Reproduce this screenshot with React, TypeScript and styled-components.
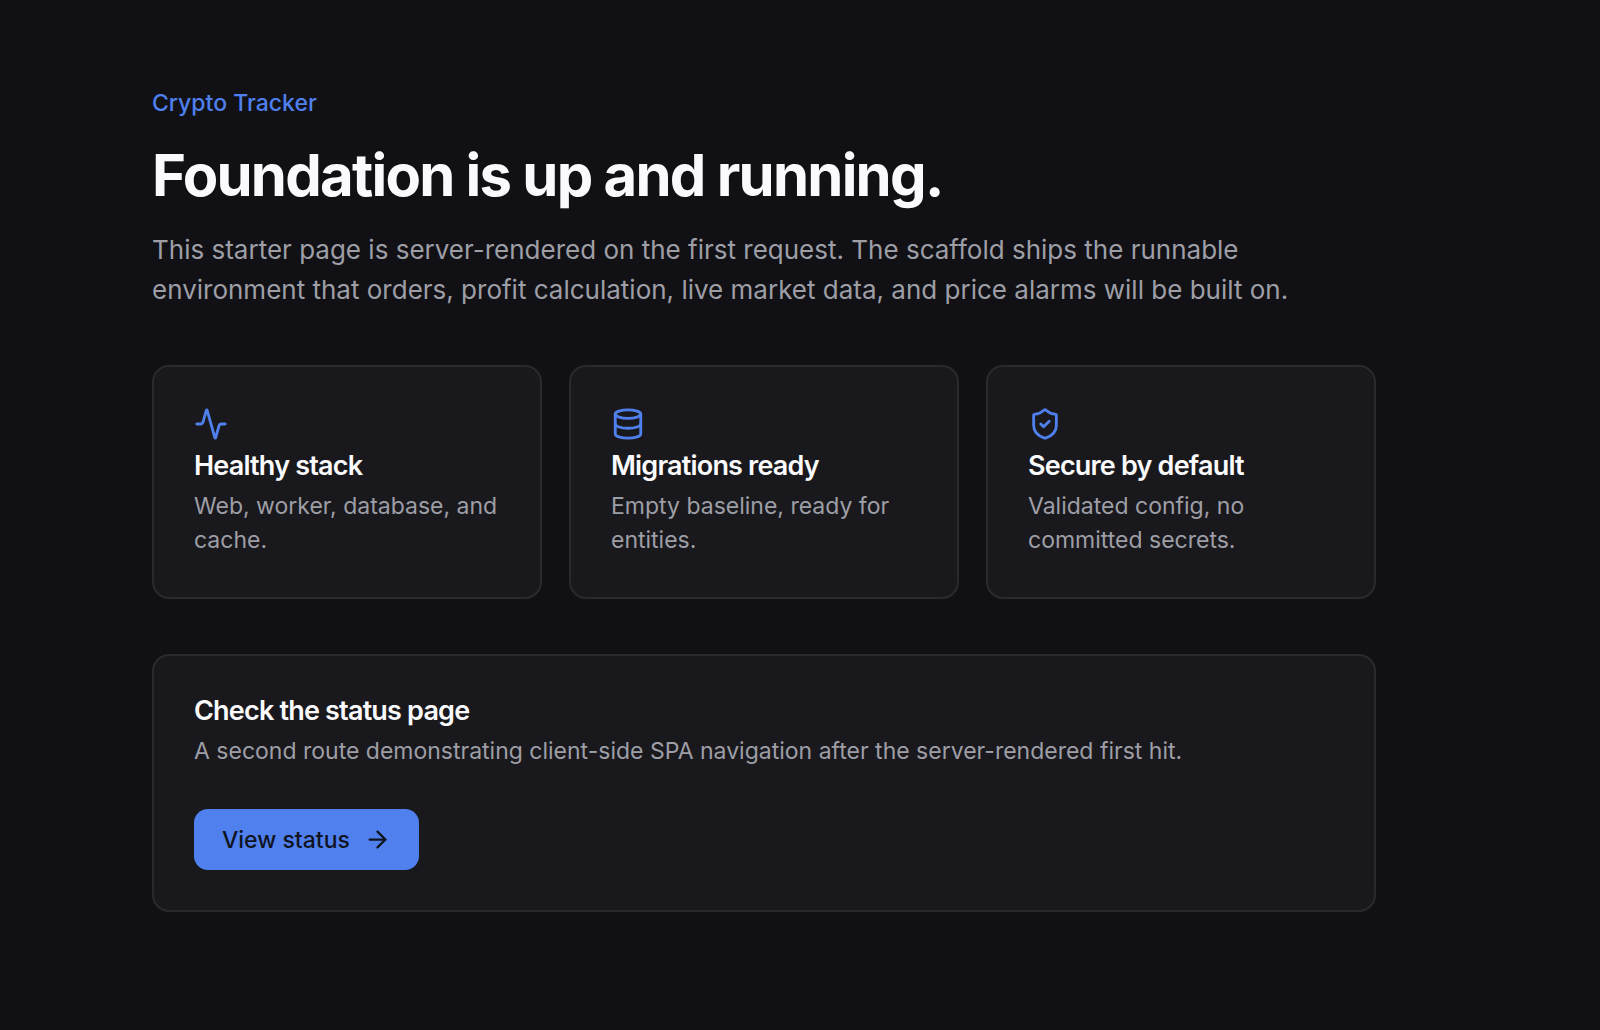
import React from "react";
import styled, { createGlobalStyle } from "styled-components";
import { Activity, ArrowRight, Database, ShieldCheck, type LucideIcon } from "lucide-react";

const GlobalStyle = createGlobalStyle`
  *, *::before, *::after { box-sizing: border-box; }
  body {
    margin: 0;
    background: #111115;
    color: #fafafc;
    font-family: Inter, "Liberation Sans", sans-serif;
    -webkit-font-smoothing: antialiased;
  }
`;

const Page = styled.main`
  display: flex;
  flex-direction: column;
  gap: 55px;
  min-height: 100vh;
  padding: 86px 224px 86px 152px;

  @media (max-width: 1100px) {
    padding: 48px 32px;
  }
`;

const Header = styled.header`
  display: flex;
  flex-direction: column;
  gap: 20px;
`;

const Eyebrow = styled.p`
  margin: 0;
  color: #4f80ee;
  font-size: 23px;
  font-weight: 500;
  line-height: 34px;
`;

const Title = styled.h1`
  margin: 0;
  font-size: 58px;
  font-weight: 700;
  line-height: 70px;
  letter-spacing: -0.03em;
`;

const Lead = styled.p`
  margin: 0;
  max-width: 1152px;
  color: #9e9ea6;
  font-size: 26px;
  line-height: 40px;
`;

const Features = styled.section`
  display: grid;
  grid-template-columns: repeat(auto-fit, minmax(300px, 1fr));
  gap: 27px;
`;

const Card = styled.article`
  display: flex;
  flex-direction: column;
  align-items: flex-start;
  padding: 40px;
  border: 2px solid #29292e;
  border-radius: 17px;
  background: #19191d;
`;

const CardIcon = styled.span`
  display: flex;
  margin-bottom: 10px;
  color: #4f80ee;
`;

const CardTitle = styled.h2`
  margin: 0 0 8px;
  font-size: 27px;
  font-weight: 600;
  line-height: 30px;
  letter-spacing: -0.03em;
`;

const CardText = styled.p`
  margin: 0;
  color: #9e9ea6;
  font-size: 23px;
  line-height: 34px;
`;

const Button = styled.button`
  display: inline-flex;
  align-items: center;
  gap: 14px;
  height: 61px;
  margin-top: 41px;
  padding: 0 28px;
  border: 0;
  border-radius: 14px;
  background: #4f80ee;
  color: #10141f;
  font: 500 23px/34px Inter, "Liberation Sans", sans-serif;
  cursor: pointer;
`;

interface Feature {
  icon: LucideIcon;
  title: string;
  text: string;
}

const features: Feature[] = [
  { icon: Activity, title: "Healthy stack", text: "Web, worker, database, and cache." },
  { icon: Database, title: "Migrations ready", text: "Empty baseline, ready for entities." },
  { icon: ShieldCheck, title: "Secure by default", text: "Validated config, no committed secrets." },
];

export default function App() {
  return (
    <>
      <GlobalStyle />
      <Page>
        <Header>
          <Eyebrow>Crypto Tracker</Eyebrow>
          <Title>Foundation is up and running.</Title>
          <Lead>
            This starter page is server-rendered on the first request. The scaffold ships the
            runnable environment that orders, profit calculation, live market data, and price
            alarms will be built on.
          </Lead>
        </Header>
        <Features>
          {features.map(({ icon: Icon, title, text }) => (
            <Card key={title}>
              <CardIcon>
                <Icon size={34} aria-hidden="true" />
              </CardIcon>
              <CardTitle>{title}</CardTitle>
              <CardText>{text}</CardText>
            </Card>
          ))}
        </Features>
        <Card>
          <CardTitle>Check the status page</CardTitle>
          <CardText>
            A second route demonstrating client-side SPA navigation after the server-rendered first
            hit.
          </CardText>
          <Button type="button">
            View status
            <ArrowRight size={27} aria-hidden="true" />
          </Button>
        </Card>
      </Page>
    </>
  );
}
